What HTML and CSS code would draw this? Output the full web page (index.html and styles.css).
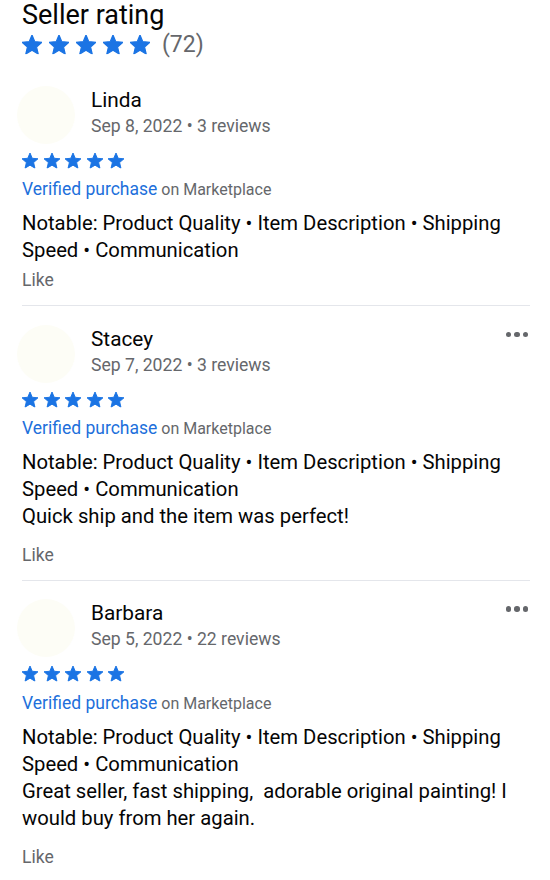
FILE: index.html
```html
<!DOCTYPE html>
<html>
<head>
<meta charset="utf-8">
<link rel="stylesheet" href="styles.css">
</head>
<body>
<svg width="0" height="0" class="defs">
  <defs>
    <symbol id="star" viewBox="2 2 20 19.3">
      <path d="M12 17.27L18.18 21l-1.64-7.03L22 9.24l-7.19-.61L12 2 9.19 8.63 2 9.24l5.46 4.73L5.82 21z" stroke="currentColor" stroke-width="1.2" stroke-linejoin="round"/>
    </symbol>
  </defs>
</svg>
<main class="page">
  <h1 class="title">Seller rating</h1>
  <div class="summary">
    <div class="stars stars-lg">
      <svg><use href="#star"/></svg><svg><use href="#star"/></svg><svg><use href="#star"/></svg><svg><use href="#star"/></svg><svg><use href="#star"/></svg>
    </div>
    <span class="count">(72)</span>
  </div>

  <section class="review first">
    <div class="head">
      <div class="avatar"></div>
      <div class="who">
        <div class="name">Linda</div>
        <div class="meta">Sep 8, 2022 • 3 reviews</div>
      </div>
    </div>
    <div class="stars stars-sm">
      <svg><use href="#star"/></svg><svg><use href="#star"/></svg><svg><use href="#star"/></svg><svg><use href="#star"/></svg><svg><use href="#star"/></svg>
    </div>
    <div class="verified"><span class="vlink">Verified purchase</span> on Marketplace</div>
    <p class="notable">Notable: Product Quality • Item Description • Shipping Speed • Communication</p>
    <div class="like">Like</div>
  </section>

  <section class="review">
    <div class="head">
      <div class="avatar"></div>
      <div class="who">
        <div class="name">Stacey</div>
        <div class="meta">Sep 7, 2022 • 3 reviews</div>
      </div>
      <div class="more"><span></span><span></span><span></span></div>
    </div>
    <div class="stars stars-sm">
      <svg><use href="#star"/></svg><svg><use href="#star"/></svg><svg><use href="#star"/></svg><svg><use href="#star"/></svg><svg><use href="#star"/></svg>
    </div>
    <div class="verified"><span class="vlink">Verified purchase</span> on Marketplace</div>
    <p class="notable">Notable: Product Quality • Item Description • Shipping Speed • Communication</p>
    <p class="comment">Quick ship and the item was perfect!</p>
    <div class="like">Like</div>
  </section>

  <section class="review last">
    <div class="head">
      <div class="avatar"></div>
      <div class="who">
        <div class="name">Barbara</div>
        <div class="meta">Sep 5, 2022 • 22 reviews</div>
      </div>
      <div class="more"><span></span><span></span><span></span></div>
    </div>
    <div class="stars stars-sm">
      <svg><use href="#star"/></svg><svg><use href="#star"/></svg><svg><use href="#star"/></svg><svg><use href="#star"/></svg><svg><use href="#star"/></svg>
    </div>
    <div class="verified"><span class="vlink">Verified purchase</span> on Marketplace</div>
    <p class="notable">Notable: Product Quality • Item Description • Shipping Speed • Communication</p>
    <p class="comment">Great seller, fast shipping,&nbsp; adorable original painting! I would buy from her again.</p>
    <div class="like">Like</div>
  </section>
</main>
</body>
</html>
```

FILE: styles.css
```css
* { box-sizing: border-box; }
html, body { margin: 0; padding: 0; background: #fff; }
body {
  font-family: Roboto, "Liberation Sans", Arial, sans-serif;
  color: #050505;
  width: 550px;
  height: 880px;
  overflow: hidden;
}
.defs { position: absolute; width: 0; height: 0; }
.page { padding: 0 20px 0 22px; }

.title {
  margin: 0;
  font-size: 27px;
  font-weight: 400;
  line-height: 30px;
  color: #050505;
}
.summary {
  display: flex;
  align-items: center;
  height: 30px;
}
.stars { display: flex; color: #1b74e4; }
.stars svg { fill: currentColor; display: block; overflow: visible; }
.stars-lg { gap: 7px; }
.stars-lg svg { width: 20px; height: 19.3px; }
.count {
  margin-left: 12px;
  font-size: 23px;
  color: #65676b;
  line-height: 30px;
}

.review { padding-top: 19px; border-bottom: 1px solid #e4e6eb; padding-bottom: 13px; }
.review.first { padding-top: 26px; }
.review.last { border-bottom: none; padding-top: 18px; }

.head { display: flex; align-items: flex-start; position: relative; }
.avatar {
  width: 58px;
  height: 58px;
  border-radius: 50%;
  background: #fdfdf6;
  flex: none;
  margin-left: -5px;
}
.who { margin-left: 16px; padding-top: 2px; flex: 1; }
.name { font-size: 20.8px; line-height: 24px; color: #050505; }
.meta { font-size: 17.6px; line-height: 29px; color: #65676b; }
.more {
  display: flex;
  gap: 3px;
  padding-top: 7px;
  margin-right: 2px;
}
.more span {
  width: 5.5px;
  height: 5.5px;
  border-radius: 50%;
  background: #65676b;
}

.stars-sm { margin-top: 9px; gap: 5.5px; }
.stars-sm svg { width: 16px; height: 15.4px; }

.verified {
  margin-top: 9px;
  font-size: 16px;
  line-height: 24px;
  color: #65676b;
}
.vlink { color: #216fdb; font-size: 17.5px; }

.notable, .comment {
  margin: 0;
  font-size: 20.25px;
  line-height: 27px;
  color: #050505;
}
.notable { margin-top: 8px; }
.comment { margin-bottom: 13px; }
.like {
  margin-top: 3.5px;
  font-size: 17.5px;
  line-height: 24px;
  color: #65676b;
}
```
